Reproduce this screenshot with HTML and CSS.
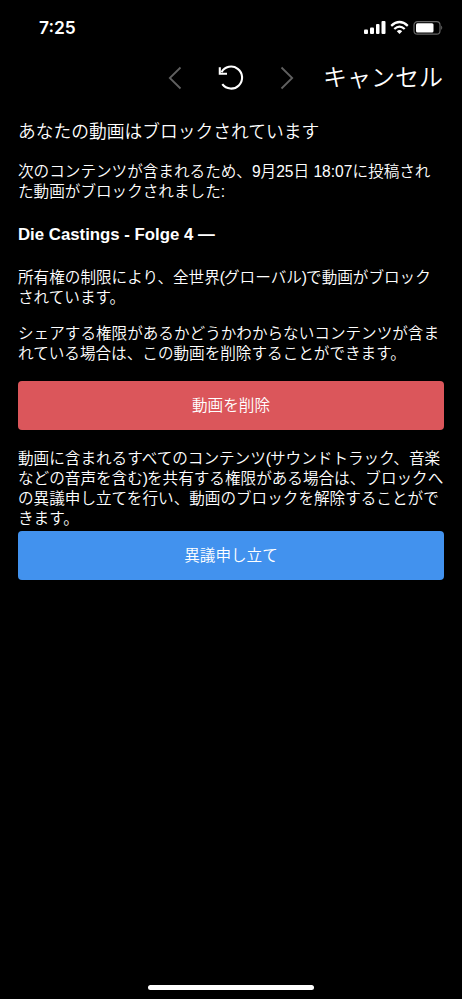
FILE: index.html
```html
<!DOCTYPE html>
<html lang="ja">
<head>
<meta charset="utf-8">
<title>ブロックされた動画</title>
<link rel="stylesheet" href="styles.css">
</head>
<body>
<div class="screen">
  <header class="status">
    <span class="time">7:25</span>
    <svg class="status-icons" width="80" height="16" viewBox="0 0 80 16" fill="#fff">
      <rect x="0" y="9.500" width="4" height="4.500" rx="1"/><rect x="6" y="7.500" width="4" height="6.500" rx="1"/><rect x="12" y="4" width="3.500" height="10" rx="1"/><rect x="17.500" y="1" width="4" height="13" rx="1"/>
      <g fill="none" stroke="#fff" stroke-width="2.300"><path d="M27.200 5.800Q35.500 -1.800 43.800 5.800"/><path d="M30.300 9Q35.500 4.300 40.700 9"/></g>
      <path d="M32.800 11.200Q35.500 9 38.200 11.200L35.500 14Z"/>
      <rect x="50" y="1.600" width="26" height="12.600" rx="3.500" fill="none" stroke="#666" stroke-width="1.200"/>
      <rect x="52" y="3.200" width="17.500" height="9.200" rx="1.500"/>
      <path d="M77.200 5.500Q79.300 7.500 77.200 10Z" fill="#666"/>
    </svg>
  </header>
  <nav class="toolbar">
    <svg width="14" height="24" viewBox="0 0 14 24" class="chev"><path d="M12.500 1.500L1.800 12L12.500 22.500"/></svg>
    <svg width="28" height="28" viewBox="0 0 28 28" class="reload"><path d="M4.500 8.200A11 11 0 1 1 5.300 20.200"/><path d="M2.800 3.300V9.700H10"/></svg>
    <svg width="14" height="24" viewBox="0 0 14 24" class="chev"><path d="M1.500 1.500L12.200 12L1.500 22.500"/></svg>
    <span class="cancel">キャンセル</span>
  </nav>
  <main>
    <h1>あなたの動画はブロックされています</h1>
    <p class="intro">次のコンテンツが含まれるため、9月25日 18:07に投稿され<br>た動画がブロックされました:</p>
    <h2>Die Castings - Folge 4 —</h2>
    <p class="reason">所有権の制限により、全世界<span class="paren">(</span>グローバル<span class="paren">)</span>で動画がブロック<br>されています。</p>
    <p class="advice">シェアする権限があるかどうかわからないコンテンツが含ま<br>れている場合は、この動画を削除することができます。</p>
    <button class="btn delete">動画を削除</button>
    <p class="appeal-text">動画に含まれるすべてのコンテンツ<span class="paren">(</span>サウンドトラック、音楽<br>などの音声を含む<span class="paren">)</span>を共有する権限がある場合は、ブロックへ<br>の異議申し立てを行い、動画のブロックを解除することがで<br>きます。</p>
    <button class="btn appeal">異議申し立て</button>
  </main>
  <div class="home"></div>
</div>
</body>
</html>
```
FILE: styles.css
```css
* { box-sizing: border-box; }
body { margin: 0; background: #000; color: #fff; font-family: "Liberation Sans", "Noto Sans CJK JP", sans-serif; font-weight: 350; }
.screen { width: 462px; height: 999px; display: flex; flex-direction: column; overflow: hidden; }
.status { height: 56px; padding: 0 18px 0 39px; display: flex; align-items: center; justify-content: space-between; }
.time { font: 600 17.4px/20px Inter, sans-serif; }
.status-icons { overflow: visible; }
.toolbar { height: 44px; padding: 0 19px 0 168px; display: flex; align-items: center; }
.chev { fill: none; stroke: #606060; stroke-width: 1.8; }
.reload { margin: 0 35px; fill: none; stroke: #fff; stroke-width: 2.1; }
.cancel { margin-left: auto; font-size: 24px; line-height: 30px; white-space: nowrap; }
main { padding: 21px 18px 0; }
h1, h2, p { margin: 0; white-space: nowrap; }
h1 { font-size: 17.75px; line-height: 22px; font-weight: 350; }
p { font-size: 15.6px; line-height: 20px; }
.paren { letter-spacing: -1px; }
.intro { margin-top: 19px; }
h2 { margin-top: 23px; font-size: 16.8px; line-height: 20px; font-weight: 700; }
.reason { margin-top: 23px; }
.advice { margin-top: 16px; }
.btn { display: block; width: 426px; height: 49px; padding: 0; border: 0; border-radius: 4px; color: #fff; font-family: inherit; font-size: 15.6px; font-weight: 350; line-height: 20px; }
.delete { margin-top: 17px; background: #db565b; }
.appeal-text { margin-top: 19px; }
.appeal { margin-top: 2px; padding-top: 1px; background: #4292ee; }
.delete { padding-top: 1px; }
.home { margin: auto auto 9px; width: 166px; height: 5px; border-radius: 3px; background: #fff; }
```
